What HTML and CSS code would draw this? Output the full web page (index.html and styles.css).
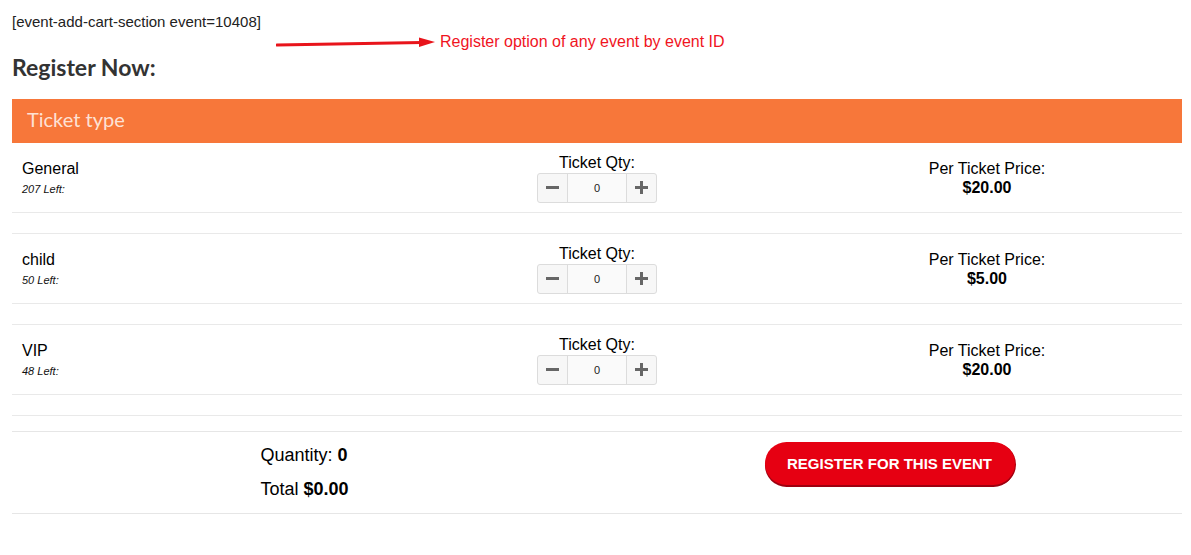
FILE: index.html
```html
<!DOCTYPE html>
<html>
<head>
<meta charset="utf-8">
<link rel="stylesheet" href="styles.css">
</head>
<body>
<div class="page">
  <div class="shortcode">[event-add-cart-section event=10408]</div>
  <div class="annotation">
    <svg class="arrow" width="162" height="12" viewBox="0 0 162 12">
      <line x1="1" y1="8" x2="146" y2="5.5" stroke="#e8141b" stroke-width="3" stroke-linecap="round"/>
      <polygon points="143,0.5 159,5 143,10" fill="#e8141b"/>
    </svg>
    <span class="note">Register option of any event by event ID</span>
  </div>
  <h2 class="title">Register Now:</h2>
  <div class="bar">Ticket type</div>

  <div class="row">
    <div class="cell name-cell">
      <div class="tname">General</div>
      <div class="left">207 Left:</div>
    </div>
    <div class="cell mid">
      <div class="lbl">Ticket Qty:</div>
      <div class="qty">
        <span class="qbtn"><span class="minus"></span></span>
        <span class="qval">0</span>
        <span class="qbtn"><span class="plus"></span></span>
      </div>
    </div>
    <div class="cell price">
      <div class="lbl2">Per Ticket Price:</div>
      <div class="amt">$20.00</div>
    </div>
  </div>

  <div class="row">
    <div class="cell name-cell">
      <div class="tname">child</div>
      <div class="left">50 Left:</div>
    </div>
    <div class="cell mid">
      <div class="lbl">Ticket Qty:</div>
      <div class="qty">
        <span class="qbtn"><span class="minus"></span></span>
        <span class="qval">0</span>
        <span class="qbtn"><span class="plus"></span></span>
      </div>
    </div>
    <div class="cell price">
      <div class="lbl2">Per Ticket Price:</div>
      <div class="amt">$5.00</div>
    </div>
  </div>

  <div class="row">
    <div class="cell name-cell">
      <div class="tname">VIP</div>
      <div class="left">48 Left:</div>
    </div>
    <div class="cell mid">
      <div class="lbl">Ticket Qty:</div>
      <div class="qty">
        <span class="qbtn"><span class="minus"></span></span>
        <span class="qval">0</span>
        <span class="qbtn"><span class="plus"></span></span>
      </div>
    </div>
    <div class="cell price">
      <div class="lbl2">Per Ticket Price:</div>
      <div class="amt">$20.00</div>
    </div>
  </div>

  <div class="divider"></div>

  <div class="footer">
    <div class="half totals">
      <div class="tblock">
        <div class="tline">Quantity: <b>0</b></div>
        <div class="tline">Total <b>$0.00</b></div>
      </div>
    </div>
    <div class="half action">
      <button class="reg">REGISTER FOR THIS EVENT</button>
    </div>
  </div>
</div>
</body>
</html>
```

FILE: styles.css
```css
* { box-sizing: border-box; }
html, body { margin: 0; padding: 0; background: #fff; }
body { font-family: "Liberation Sans", Arial, sans-serif; color: #000; }

.page {
  position: relative;
  width: 1170px;
  margin-left: 12px;
  padding-top: 12px;
}

.shortcode {
  font-size: 15px;
  line-height: 20px;
  color: #222;
}

.annotation {
  position: absolute;
  left: 264px;
  top: 32px;
  display: flex;
  align-items: center;
}
.arrow { display: block; margin-top: 2px; }
.note {
  color: #f0141e;
  font-size: 16px;
  line-height: 20px;
  margin-left: 2px;
}

.title {
  margin: 21px 0 0 0;
  font-family: "Lato", "Noto Sans", sans-serif;
  font-weight: 700;
  font-size: 23px;
  line-height: 28px;
  color: #333;
}

.bar {
  margin-top: 18px;
  height: 44px;
  background: #f7773a;
  color: rgba(255, 255, 255, 0.8);
  font-family: "Lato", sans-serif;
  font-size: 20px;
  line-height: 41px;
  padding-left: 15px;
}

.row {
  display: grid;
  grid-template-columns: 1fr 1fr 1fr;
  align-items: center;
  height: 70px;
  border-bottom: 1px solid #e9e9e9;
}
.row + .row {
  margin-top: 20px;
  height: 71px;
  border-top: 1px solid #e9e9e9;
}

.name-cell { padding-left: 10px; }
.tname { font-size: 16px; line-height: 18px; }
.left { font-size: 11px; font-style: italic; line-height: 13px; margin-top: 5px; color: #111; }

.mid { display: flex; flex-direction: column; align-items: center; }
.lbl { font-size: 16px; line-height: 18px; margin-top: 1px; }
.qty {
  margin-top: 1px;
  display: flex;
  width: 120px;
  height: 30px;
  border: 1px solid #dcdcdc;
  border-radius: 3px;
  background: #f7f7f7;
}
.qbtn {
  width: 29px;
  display: flex;
  align-items: center;
  justify-content: center;
  position: relative;
}
.qval {
  flex: 1;
  border-left: 1px solid #dcdcdc;
  border-right: 1px solid #dcdcdc;
  background: #fafafa;
  text-align: center;
  font-size: 11px;
  line-height: 28px;
  color: #222;
}
.minus, .plus { position: relative; width: 13px; height: 3px; background: #666; display: block; }
.plus::after {
  content: "";
  position: absolute;
  left: 5px;
  top: -5px;
  width: 3px;
  height: 13px;
  background: #666;
}

.price { text-align: center; }
.lbl2 { font-size: 16px; line-height: 19px; }
.amt { font-size: 16px; line-height: 19px; font-weight: 700; }

.divider {
  margin-top: 20px;
  border-top: 1px solid #e9e9e9;
  height: 16px;
}

.footer {
  display: grid;
  grid-template-columns: 1fr 1fr;
  border-top: 1px solid #e6e6e6;
  border-bottom: 1px solid #e6e6e6;
  height: 83px;
}
.half { display: flex; justify-content: center; align-items: flex-start; }
.tblock { padding-top: 6px; }
.tline { font-size: 18px; line-height: 34px; }
.action { padding-top: 10px; }
.reg {
  width: 250px;
  height: 43px;
  border: none;
  border-radius: 22px;
  background: #e60012;
  box-shadow: 0 2px 0 #9e0010, 1px 1px 0 #b0000e;
  color: #fff;
  font-family: "Liberation Sans", Arial, sans-serif;
  font-weight: 700;
  font-size: 15px;
  cursor: pointer;
}
```
